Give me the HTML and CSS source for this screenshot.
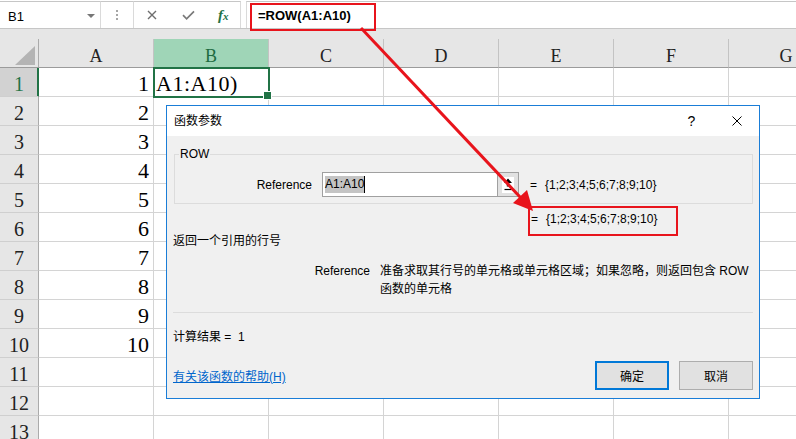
FILE: index.html
```html
<!DOCTYPE html>
<html lang="zh-CN">
<head>
    <meta charset="UTF-8">
    <title>函数参数 - ROW</title>
    <link rel="stylesheet" href="styles.css">
</head>
<body>
    <!-- 编辑栏 -->
    <div class="formula-bar">
        <div class="name-box">B1<span class="name-caret"></span></div>
        <div class="grip"><span></span><span></span><span></span></div>
        <div class="fx-buttons">
            <svg class="icon-cancel" width="10" height="10" viewBox="0 0 10 10"><path d="M1 1L9 9M9 1L1 9" stroke="#6e6e6e" stroke-width="1.4"/></svg>
            <svg class="icon-enter" width="13" height="10" viewBox="0 0 13 10"><path d="M1 5.2L4.6 8.8L12 1.4" fill="none" stroke="#7a7a7a" stroke-width="1.7"/></svg>
            <i class="fx">f<span>x</span></i>
        </div>
        <div class="formula-input">=ROW(A1:A10)</div>
    </div>

    <!-- 工作表 -->
    <div class="sheet">
        <table class="grid">
            <colgroup>
                <col class="col-row-head">
                <col><col><col><col><col><col><col>
            </colgroup>
            <thead>
                <tr>
                    <th class="corner"><div class="select-all"></div></th>
                    <th>A</th><th class="active">B</th><th>C</th><th>D</th><th>E</th><th>F</th><th>G</th>
                </tr>
            </thead>
            <tbody>
                <tr><th class="active">1</th><td class="num">1</td><td class="selected">A1:A10)</td><td></td><td></td><td></td><td></td><td></td></tr>
                <tr><th>2</th><td class="num">2</td><td></td><td></td><td></td><td></td><td></td><td></td></tr>
                <tr><th>3</th><td class="num">3</td><td></td><td></td><td></td><td></td><td></td><td></td></tr>
                <tr><th>4</th><td class="num">4</td><td></td><td></td><td></td><td></td><td></td><td></td></tr>
                <tr><th>5</th><td class="num">5</td><td></td><td></td><td></td><td></td><td></td><td></td></tr>
                <tr><th>6</th><td class="num">6</td><td></td><td></td><td></td><td></td><td></td><td></td></tr>
                <tr><th>7</th><td class="num">7</td><td></td><td></td><td></td><td></td><td></td><td></td></tr>
                <tr><th>8</th><td class="num">8</td><td></td><td></td><td></td><td></td><td></td><td></td></tr>
                <tr><th>9</th><td class="num">9</td><td></td><td></td><td></td><td></td><td></td><td></td></tr>
                <tr><th>10</th><td class="num">10</td><td></td><td></td><td></td><td></td><td></td><td></td></tr>
                <tr><th>11</th><td></td><td></td><td></td><td></td><td></td><td></td><td></td></tr>
                <tr><th>12</th><td></td><td></td><td></td><td></td><td></td><td></td><td></td></tr>
                <tr><th>13</th><td></td><td></td><td></td><td></td><td></td><td></td><td></td></tr>
            </tbody>
        </table>
    </div>

    <!-- 函数参数对话框 -->
    <div class="dialog">
        <div class="dialog-title">
            <span class="dialog-caption">函数参数</span>
            <span class="title-btn">?</span>
            <span class="title-btn">
                <svg width="10" height="10" viewBox="0 0 10 10"><path d="M0.5 0.5L9.5 9.5M9.5 0.5L0.5 9.5" stroke="#000" stroke-width="1"/></svg>
            </span>
        </div>
        <div class="dialog-body">
            <fieldset class="arg-group">
                <legend>ROW</legend>
                <div class="arg-row">
                    <label class="arg-label">Reference</label>
                    <div class="arg-input">
                        <span class="arg-value"><span class="sel">A1:A10</span><span class="text-caret"></span></span>
                        <span class="ref-btn">
                            <svg width="12" height="16" viewBox="0 0 12 16"><rect x="0" y="0" width="12" height="16" fill="#fff"/><path d="M6 1.5L10 6H7.2V9.5H4.8V6H2Z" fill="#000"/><path d="M2.5 12.5H9.5" stroke="#000" stroke-width="1.2"/></svg>
                        </span>
                    </div>
                    <span class="arg-eq">=</span>
                    <span class="arg-result">{1;2;3;4;5;6;7;8;9;10}</span>
                </div>
            </fieldset>

            <div class="formula-result"><span>=</span><span class="arg-result">{1;2;3;4;5;6;7;8;9;10}</span></div>

            <p class="fn-desc">返回一个引用的行号</p>

            <div class="arg-help">
                <span class="arg-help-name">Reference</span>
                <span class="arg-help-text">准备求取其行号的单元格或单元格区域；如果忽略，则返回包含 ROW 函数的单元格</span>
            </div>

            <div class="separator"></div>

            <div class="calc-result">计算结果 =&nbsp;&nbsp;1</div>

            <div class="dialog-footer">
                <a class="help-link" href="#">有关该函数的帮助(H)</a>
                <button class="btn btn-primary">确定</button>
                <button class="btn">取消</button>
            </div>
        </div>
    </div>

    <!-- 标注 -->
    <svg class="annotation" width="796" height="439" viewBox="0 0 796 439">
        <rect x="251" y="4" width="124" height="26" fill="none" stroke="#e8141c" stroke-width="2"/>
        <rect x="529" y="207" width="148" height="28" fill="none" stroke="#e8141c" stroke-width="2"/>
        <line x1="361" y1="28" x2="521" y2="198" stroke="#e8141c" stroke-width="3"/>
        <polygon points="533,211 513,203 527,190" fill="#e8141c"/>
    </svg>
</body>
</html>
```

FILE: styles.css
```css
* {
    margin: 0;
    padding: 0;
    box-sizing: border-box;
}

html,
body {
    width: 796px;
    height: 439px;
    overflow: hidden;
}

body {
    position: relative;
    background: #e6e6e6;
    font-family: "Liberation Sans", "Noto Sans CJK SC", sans-serif;
    font-size: 12px;
    color: #000;
}

/* 编辑栏 */
.formula-bar {
    display: flex;
    height: 29px;
    padding-top: 1px;
    background: #fff;
    border-bottom: 1px solid #c6c6c6;
}

.formula-bar > div {
    border-top: 1px solid #c6c6c6;
}

.name-box {
    display: flex;
    align-items: center;
    width: 101px;
    padding: 2px 0 0 8px;
    border-right: 1px solid #dadada;
    font-size: 13px;
}

.name-caret {
    margin-left: auto;
    margin-right: 5px;
    border-left: 4px solid transparent;
    border-right: 4px solid transparent;
    border-top: 4px solid #777;
}

.grip {
    display: flex;
    flex-direction: column;
    align-items: center;
    justify-content: center;
    gap: 2px;
    width: 32px;
}

.grip span {
    width: 2px;
    height: 2px;
    background: #a6a6a6;
}

.fx-buttons {
    display: flex;
    align-items: center;
    width: 108px;
    padding-left: 13px;
    border-left: 1px solid #dadada;
    border-right: 1px solid #dadada;
}

.icon-enter {
    margin-left: 25px;
}

.fx {
    margin-left: 23px;
    font-family: "Liberation Serif", serif;
    font-size: 15px;
    font-weight: bold;
    color: #217346;
}

.fx span {
    font-size: 11px;
}

.formula-input {
    flex: 1;
    margin-left: 5px;
    padding: 1px 0 0 11px;
    border-left: 1px solid #dadada;
    line-height: 25px;
    font-size: 13px;
    font-weight: bold;
}

/* 工作表 */
.sheet {
    margin-top: 10px;
    width: 844px;
}

.grid {
    width: 844px;
    min-width: 844px;
    table-layout: fixed;
    border-collapse: separate;
    border-spacing: 0;
    font-family: "Liberation Serif", serif;
}

.grid col {
    width: 115px;
}

.grid col.col-row-head {
    width: 39px;
}

.grid tr {
    height: 29px;
}

.grid thead th {
    padding-top: 6px;
    line-height: 22px;
    font-size: 18px;
    font-weight: normal;
    color: #222;
    vertical-align: top;
    background: #e6e6e6;
    border-right: 1px solid #c3c3c3;
    border-bottom: 1px solid #9b9b9b;
}

.grid thead th.active {
    background: #9fd5b7;
    color: #1e6b41;
    border-bottom-color: #217346;
}

.grid thead th.corner {
    padding: 0;
    vertical-align: bottom;
    border-right-color: #ababab;
}

.select-all {
    width: 0;
    height: 0;
    margin: 0 3px 2px auto;
    border-left: 20px solid transparent;
    border-bottom: 19px solid #b4b4b4;
}

.grid tbody th {
    padding-top: 4px;
    line-height: 24px;
    font-size: 20px;
    font-weight: normal;
    color: #222;
    vertical-align: top;
    background: #e6e6e6;
    border-right: 1px solid #ababab;
    border-bottom: 1px solid #cfcfcf;
}

.grid tbody th.active {
    background: #d2d2d2;
    color: #217346;
    border-right-color: #217346;
    box-shadow: inset -1px 0 #217346;
}

.grid td {
    padding: 4px 4px 0 2px;
    line-height: 24px;
    font-size: 22px;
    white-space: nowrap;
    vertical-align: top;
    background: #fff;
    border-right: 1px solid #d4d4d4;
    border-bottom: 1px solid #d4d4d4;
}

.grid td.num {
    text-align: right;
}

.grid td.selected {
    position: relative;
    letter-spacing: 0.5px;
    outline: 2px solid #217346;
    outline-offset: -1px;
}

.grid td.selected::after {
    content: "";
    position: absolute;
    right: -4px;
    bottom: -4px;
    width: 7px;
    height: 7px;
    background: #217346;
    border: 1px solid #fff;
}

/* 对话框 */
.dialog {
    position: absolute;
    left: 166px;
    top: 105px;
    width: 594px;
    height: 294px;
    background: #f0f0f0;
    border: 1px solid #1a7dd7;
    line-height: 16px;
}

.dialog-title {
    display: flex;
    align-items: center;
    height: 30px;
    padding-left: 7px;
    background: #fff;
}

.dialog-caption {
    margin-right: auto;
}

.title-btn {
    display: flex;
    align-items: center;
    justify-content: center;
    width: 45px;
    height: 30px;
    font-size: 14px;
}

.dialog-body {
    padding: 0 6px;
}

.arg-group {
    margin: 10px 0 0 1px;
    padding: 10px 0 6px;
    border: 1px solid #dcdcdc;
}

.arg-group legend {
    margin-left: 4px;
    padding: 0 1px;
    line-height: 16px;
}

.arg-row {
    display: flex;
    align-items: center;
}

.arg-label {
    width: 137px;
    margin-right: 10px;
    text-align: right;
}

.arg-input {
    display: flex;
    width: 197px;
    height: 25px;
    background: #fff;
    border: 1px solid #a0a0a0;
}

.arg-value {
    flex: 1;
    display: flex;
    align-items: center;
    padding-left: 2px;
}

.sel {
    background: #c4c4c4;
    line-height: 17px;
}

.text-caret {
    width: 1px;
    height: 17px;
    background: #000;
}

.ref-btn {
    display: flex;
    align-items: center;
    justify-content: center;
    width: 21px;
    background: #e1e1e1;
    border-left: 1px solid #a0a0a0;
}

.arg-eq {
    margin-left: 11px;
}

.arg-result {
    margin-left: 8px;
}

.formula-result {
    margin-top: 7px;
    padding-left: 358px;
}

.fn-desc {
    margin-top: 6px;
}

.arg-help {
    display: flex;
    margin-top: 13px;
    line-height: 18px;
}

.arg-help-name {
    width: 197px;
    margin-right: 10px;
    text-align: right;
}

.arg-help-text {
    flex: 1;
}

.separator {
    height: 1px;
    margin-top: 14px;
    background: #dcdcdc;
}

.calc-result {
    margin-top: 16px;
}

.dialog-footer {
    display: flex;
    align-items: flex-end;
    gap: 10px;
    margin-top: 16px;
}

.help-link {
    margin-right: auto;
    margin-bottom: 5px;
    color: #0066cc;
    text-decoration: underline;
}

.btn {
    width: 74px;
    height: 29px;
    background: #e1e1e1;
    border: 1px solid #adadad;
    font-family: inherit;
    font-size: 12px;
    color: #000;
}

.btn-primary {
    border: 2px solid #0078d7;
}

/* 标注层 */
.annotation {
    position: absolute;
    left: 0;
    top: 0;
    pointer-events: none;
}
```
